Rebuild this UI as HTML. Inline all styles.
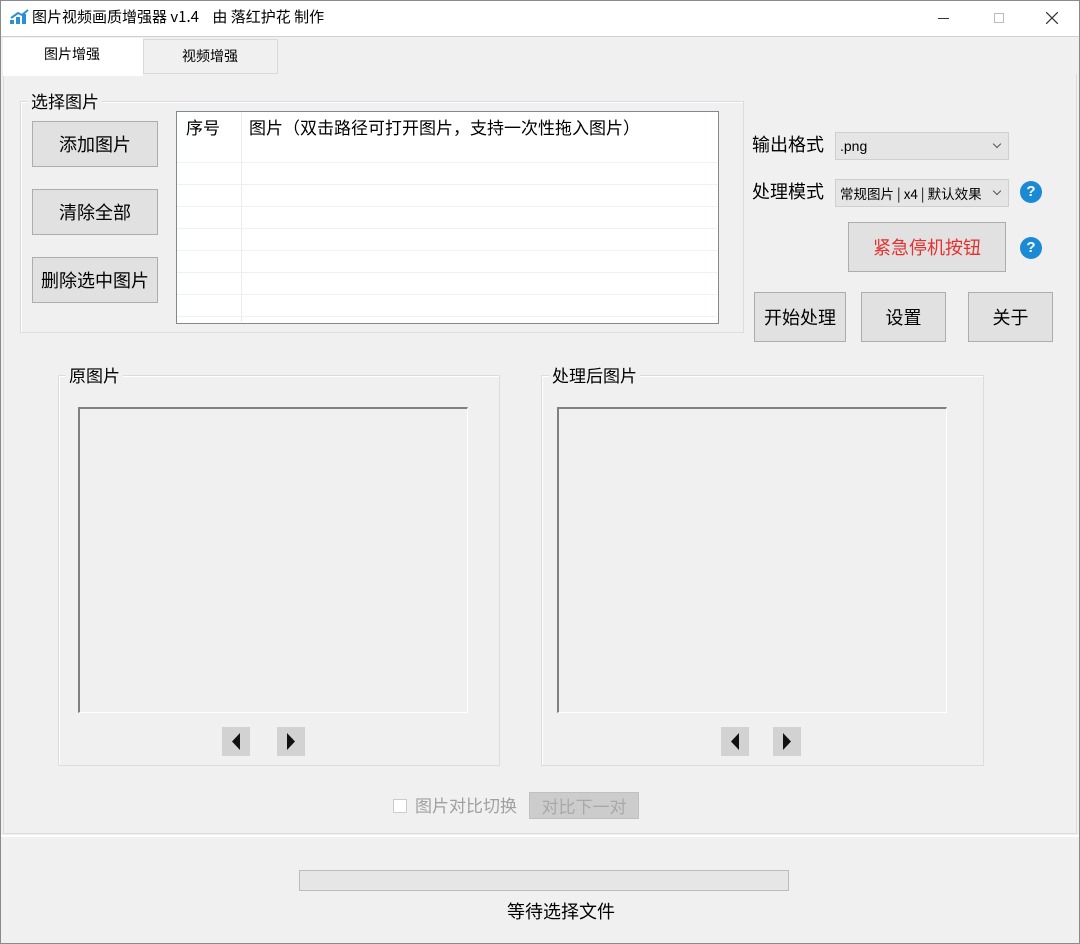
<!DOCTYPE html>
<html><head><meta charset="utf-8"><style>
*{margin:0;padding:0;box-sizing:border-box}
body{width:1080px;height:944px;background:#f0f0f0;position:relative;overflow:hidden;font-family:"Liberation Sans","Microsoft YaHei","Noto Sans CJK SC",sans-serif;color:#000}
.a{position:absolute}
.t{position:absolute;white-space:nowrap;line-height:1}
.btn{position:absolute;background:#e1e1e1;border:1px solid #adadad;display:flex;align-items:center;justify-content:center;font-size:18px;font-family:"Noto Sans CJK SC",sans-serif}
.grp{position:absolute;border:1px solid #dcdcdc;box-shadow:inset 1px 1px 0 #fff}
.lbl{position:absolute;background:#f0f0f0;padding:0 3px;font-size:17px;line-height:1;font-family:"Noto Sans CJK SC",sans-serif}
.combo{position:absolute;background:#e5e5e5;border:1px solid #cfcfcf;font-size:14px;padding-left:4px;display:flex;align-items:center;white-space:nowrap}
.combo .ar{position:absolute;right:0;top:0;width:22px;height:26px;background:#e5e5e5}
.combo .ar:after{content:"";position:absolute;right:8px;top:8px;width:5px;height:5px;border-right:1px solid #555;border-bottom:1px solid #555;transform:rotate(45deg)}
.q{position:absolute;width:22px;height:22px;border-radius:50%;background:#1a8ad4;color:#fff;font-weight:bold;font-size:15px;text-align:center;line-height:22px}
.pic{position:absolute;border-top:2px solid #808080;border-left:2px solid #808080;border-right:1px solid #fff;border-bottom:1px solid #fff;background:#f0f0f0}
.arr{position:absolute;width:28px;height:29px;background:#d2d2d2}
.cjk{font-family:"Noto Sans CJK SC",sans-serif}
</style></head><body>
<div class="a" style="left:0;top:0;width:1080px;height:37px;background:#fff;border-bottom:1px solid #d0d0d0"></div>
<svg class="a" style="left:10px;top:9px" width="20" height="16" viewBox="0 0 20 16"><rect x="0" y="11" width="4" height="4" fill="#2a8fd6"/><rect x="6" y="8" width="4" height="7" fill="#2a8fd6"/><rect x="12" y="5" width="4" height="10" fill="#2a8fd6"/><path d="M1 9 L8 4 L12 6 L18 1" stroke="#2a8fd6" stroke-width="2" fill="none"/></svg>
<div class="t cjk" style="left:32px;top:9px;font-size:15px">图片视频画质增强器 v1.4 &nbsp;&nbsp;&nbsp;由 落红护花 制作</div>
<div class="a" style="left:938px;top:18px;width:11px;height:1px;background:#333"></div>
<div class="a" style="left:994px;top:13px;width:10px;height:10px;border:1px solid #bbb"></div>
<svg class="a" style="left:1046px;top:12px" width="12" height="12"><path d="M0 0L12 12M12 0L0 12" stroke="#333" stroke-width="1.2"/></svg>
<div class="a" style="left:143px;top:39px;width:135px;height:35px;border:1px solid #d9d9d9;background:#f0f0f0"></div>
<div class="t cjk" style="left:182px;top:49px;font-size:14px">视频增强</div>
<div class="a" style="left:3px;top:74px;width:1074px;height:760px;border:1px solid #dcdcdc;border-top:none;background:#f0f0f0"></div>
<div class="a" style="left:3px;top:38px;width:140px;height:38px;background:#fff"></div>
<div class="t cjk" style="left:44px;top:47px;font-size:14px">图片增强</div>
<div class="grp" style="left:20px;top:101px;width:724px;height:232px"></div>
<div class="lbl" style="left:28px;top:92px">选择图片</div>
<div class="btn" style="left:32px;top:121px;width:126px;height:46px">添加图片</div>
<div class="btn" style="left:32px;top:189px;width:126px;height:46px">清除全部</div>
<div class="btn" style="left:32px;top:257px;width:126px;height:46px">删除选中图片</div>
<div class="a" style="left:176px;top:111px;width:543px;height:213px;background:#fff;border:1px solid #828790"></div>
<div class="a" style="left:241px;top:112px;width:1px;height:210px;background:#ececec"></div>
<div class="a" style="left:177px;top:162px;width:540px;height:1px;background:#f0f0f0;box-shadow:0 22px 0 #f0f0f0,0 44px 0 #f0f0f0,0 66px 0 #f0f0f0,0 88px 0 #f0f0f0,0 110px 0 #f0f0f0,0 132px 0 #f0f0f0,0 154px 0 #f0f0f0"></div>
<div class="t cjk" style="left:186px;top:118px;font-size:17px">序号</div>
<div class="t cjk" style="left:249px;top:118px;font-size:17px">图片（双击路径可打开图片，支持一次性拖入图片）</div>
<div class="t cjk" style="left:752px;top:135px;font-size:18px">输出格式</div>
<div class="combo" style="left:835px;top:132px;width:174px;height:28px">.png<span class="ar"></span></div>
<div class="t cjk" style="left:752px;top:182px;font-size:18px">处理模式</div>
<div class="combo cjk" style="left:835px;top:179px;width:174px;height:28px;font-size:13.5px;overflow:hidden">常规图片 | x4 | 默认效果<span class="ar"></span></div>
<div class="q" style="left:1020px;top:181px">?</div>
<div class="btn" style="left:848px;top:222px;width:158px;height:50px;color:#e53030">紧急停机按钮</div>
<div class="q" style="left:1020px;top:237px">?</div>
<div class="btn" style="left:754px;top:292px;width:92px;height:50px">开始处理</div>
<div class="btn" style="left:861px;top:292px;width:85px;height:50px">设置</div>
<div class="btn" style="left:968px;top:292px;width:85px;height:50px">关于</div>
<div class="grp" style="left:58px;top:375px;width:442px;height:391px"></div>
<div class="lbl" style="left:66px;top:366px">原图片</div>
<div class="pic" style="left:78px;top:407px;width:390px;height:306px"></div>
<div class="arr" style="left:222px;top:727px"><svg width="28" height="29"><path d="M18 6L10 14.5L18 23Z" fill="#111"/></svg></div>
<div class="arr" style="left:277px;top:727px"><svg width="28" height="29"><path d="M10 6L18 14.5L10 23Z" fill="#111"/></svg></div>
<div class="grp" style="left:541px;top:375px;width:443px;height:391px"></div>
<div class="lbl" style="left:549px;top:366px">处理后图片</div>
<div class="pic" style="left:557px;top:407px;width:390px;height:306px"></div>
<div class="arr" style="left:721px;top:727px"><svg width="28" height="29"><path d="M18 6L10 14.5L18 23Z" fill="#111"/></svg></div>
<div class="arr" style="left:773px;top:727px"><svg width="28" height="29"><path d="M10 6L18 14.5L10 23Z" fill="#111"/></svg></div>
<div class="a" style="left:393px;top:799px;width:14px;height:14px;border:1px solid #ccc;background:#fff"></div>
<div class="t cjk" style="left:415px;top:796px;font-size:17px;color:#a0a0a0">图片对比切换</div>
<div class="a cjk" style="left:529px;top:792px;width:110px;height:27px;background:#cccccc;border:1px solid #c0c0c0;color:#a8a8a8;font-size:17px;text-align:center;line-height:25px">对比下一对</div>
<div class="a" style="left:0;top:835px;width:1080px;height:2px;background:#fff"></div>
<div class="a" style="left:299px;top:870px;width:490px;height:21px;background:#e6e6e6;border:1px solid #bcbcbc"></div>
<div class="t cjk" style="left:507px;top:902px;font-size:18px">等待选择文件</div>
<div class="a" style="left:0;top:0;width:1080px;height:944px;border:1px solid #8a8a8a;pointer-events:none"></div>
</body></html>
